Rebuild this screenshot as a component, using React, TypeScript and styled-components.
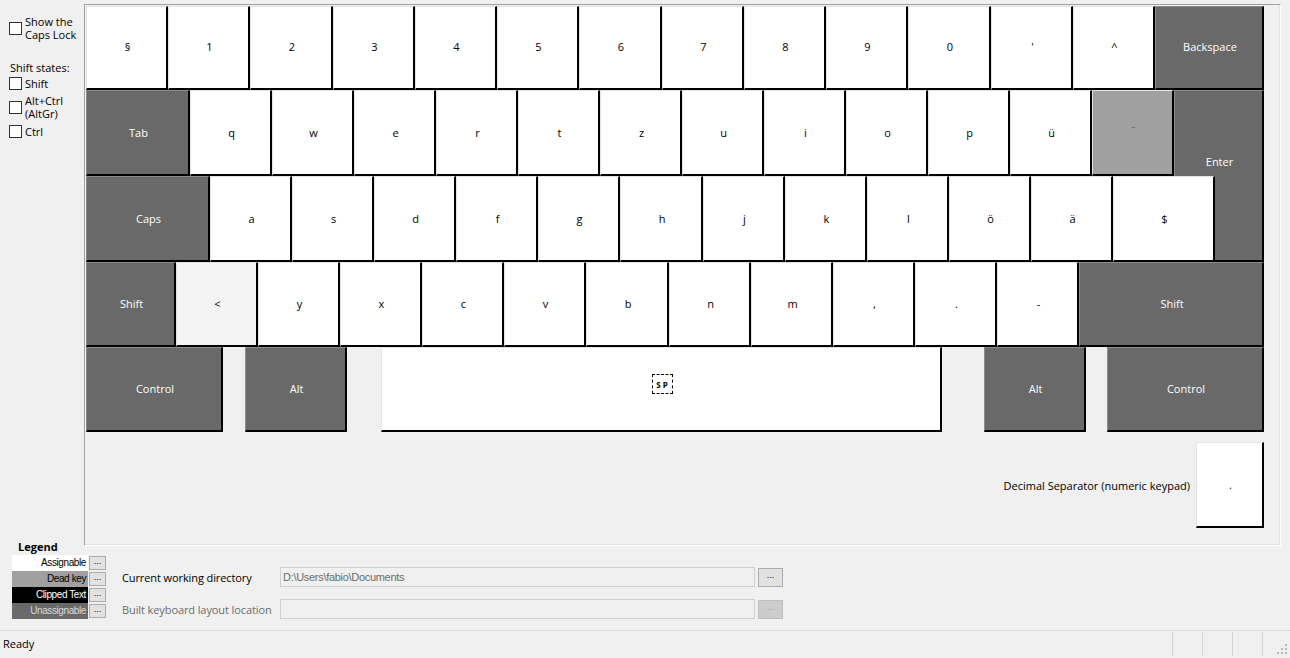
import React from 'react';
import styled, { createGlobalStyle } from 'styled-components';

const GlobalStyle = createGlobalStyle`
  html, body {
    margin: 0;
    padding: 0;
    background: #f0f0f0;
  }
  body {
    font-family: "Open Sans", "Noto Sans", sans-serif;
    font-size: 11px;
    color: #000;
  }
`;

type Kind = 'white' | 'dark' | 'dead' | 'soft';

const keyBg: Record<Kind, string> = {
    white: '#ffffff',
    dark: '#696969',
    dead: '#a0a0a0',
    soft: '#f4f4f4',
};

const Window = styled.div`
    width: 1290px;
    height: 658px;
    display: flex;
    flex-direction: column;
    overflow: hidden;
`;

const TopArea = styled.div`
    display: flex;
    height: 546px;
`;

const Sidebar = styled.div`
    width: 84px;
    flex: none;
    box-sizing: border-box;
    padding: 15px 0 0 9px;
    display: flex;
    flex-direction: column;
`;

const CheckRow = styled.label<{ $mt: number }>`
    display: flex;
    align-items: center;
    gap: 3px;
    margin-top: ${p => p.$mt}px;
    line-height: 13px;
`;

const Box = styled.span`
    width: 13px;
    height: 13px;
    box-sizing: border-box;
    border: 1px solid #333;
    background: #fff;
    flex: none;
`;

const SideHeading = styled.div`
    margin-top: 20px;
    margin-left: 1px;
    line-height: 13px;
`;

const Board = styled.div`
    box-sizing: border-box;
    margin-top: 4px;
    width: 1197px;
    height: 542px;
    border-top: 1px solid #a0a0a0;
    border-left: 1px solid #a0a0a0;
    border-right: 1px solid #fff;
    border-bottom: 1px solid #fff;
    box-shadow: inset -1px -1px 0 #e3e3e3;
    padding: 1px 0 0 1px;
`;

const Keys = styled.div`
    width: 1178px;
    display: flex;
    flex-direction: column;
`;

const Row = styled.div<{ $h: number; $lift?: number }>`
    display: flex;
    height: ${p => p.$h}px;
    --lift: ${p => p.$lift ?? 1}px;
`;

const Gap = styled.div<{ $w: number }>`
    flex: none;
    width: ${p => p.$w}px;
`;

const Key = styled.div<{ $w: number; $kind: Kind; $open?: 'top' | 'bottom' }>`
    box-sizing: border-box;
    flex: none;
    width: ${p => p.$w}px;
    height: 100%;
    display: flex;
    align-items: ${p => (p.$open === 'bottom' ? 'flex-end' : 'center')};
    justify-content: center;
    padding-bottom: ${p => (p.$open === 'bottom' ? '7px' : 'var(--lift, 1px)')};
    padding-left: 2px;
    background: ${p => keyBg[p.$kind]};
    color: ${p => (p.$kind === 'dark' ? '#fff' : '#000')};
    border-top: ${p => (p.$open === 'top' ? 'none' : `1px solid ${p.$kind === 'dark' ? '#8c8c8c' : '#e3e3e3'}`)};
    border-left: ${p => (p.$open === 'top' ? 'none' : `1px solid ${p.$kind === 'dark' ? '#8c8c8c' : '#e3e3e3'}`)};
    border-right: 2px solid #000;
    border-bottom: ${p => (p.$open === 'bottom' ? 'none' : '2px solid #000')};
    white-space: pre;
`;

const DeadMark = styled.span`
    color: #333;
    font-size: 11px;
    line-height: 1;
    margin-bottom: 4px;
`;

const FocusMark = styled.span`
    box-sizing: border-box;
    width: 21px;
    height: 20px;
    border: 1px dashed #000;
    display: flex;
    align-items: center;
    justify-content: center;
    font-size: 8px;
    font-weight: 700;
    letter-spacing: 2px;
    padding-left: 2px;
    margin-bottom: 9px;
`;

const PadRow = styled.div`
    display: flex;
    justify-content: flex-end;
    align-items: center;
    gap: 6px;
    height: 86px;
    margin-top: 10px;
`;

const BottomArea = styled.div`
    display: flex;
    height: 84px;
    padding-left: 12px;
`;

const Legend = styled.div`
    width: 95px;
    flex: none;
    display: flex;
    flex-direction: column;
`;

const LegendTitle = styled.div`
    font-weight: 700;
    line-height: 15px;
    margin: -7px 0 1px 6px;
`;

const LegendRow = styled.div`
    display: flex;
    align-items: center;
    height: 16px;
`;

const Swatch = styled.div<{ $bg: string; $fg: string }>`
    width: 76px;
    height: 100%;
    box-sizing: border-box;
    background: ${p => p.$bg};
    color: ${p => p.$fg};
    font-family: "Liberation Sans", Arial, sans-serif;
    font-size: 10px;
    letter-spacing: -0.4px;
    text-align: right;
    line-height: 16px;
    padding-right: 2px;
`;

const DotsButton = styled.button<{ $disabled?: boolean; $w: number; $h: number }>`
    box-sizing: border-box;
    width: ${p => p.$w}px;
    height: ${p => p.$h}px;
    margin-left: 1px;
    padding: 0 0 3px;
    border: 1px solid ${p => (p.$disabled ? '#bfbfbf' : '#adadad')};
    background: ${p => (p.$disabled ? '#cccccc' : '#e1e1e1')};
    color: ${p => (p.$disabled ? '#a0a0a0' : '#000')};
    font-family: "Liberation Sans", Arial, sans-serif;
    font-size: 9px;
    line-height: 1;
    display: flex;
    align-items: center;
    justify-content: center;
`;

const Form = styled.div`
    margin-left: 15px;
    padding-top: 20px;
    display: flex;
    flex-direction: column;
    gap: 10px;
`;

const FormRow = styled.div<{ $dim?: boolean }>`
    display: flex;
    align-items: center;
    height: 22px;
    color: ${p => (p.$dim ? '#6d6d6d' : '#000')};
`;

const FormLabel = styled.div`
    width: 158px;
    letter-spacing: -0.1px;
`;

const PathBox = styled.div`
    box-sizing: border-box;
    width: 475px;
    height: 20px;
    border: 1px solid #cfcfcf;
    background: #f0f0f0;
    color: #6d6d6d;
    font-family: "Liberation Sans", Arial, sans-serif;
    font-size: 11px;
    letter-spacing: -0.3px;
    line-height: 18px;
    padding-left: 2px;
    margin-right: 2px;
`;

const StatusBar = styled.div`
    display: flex;
    height: 27px;
    border-top: 1px solid #dcdcdc;
    box-sizing: border-box;
`;

const StatusText = styled.div`
    flex: 1;
    padding-left: 3px;
    line-height: 26px;
`;

const StatusPanel = styled.div<{ $w: number }>`
    width: ${p => p.$w}px;
    border-left: 1px solid #d4d4d4;
    margin: 1px 0;
    position: relative;
`;

const Grip = styled.svg`
    position: absolute;
    right: 2px;
    bottom: 1px;
`;

// split a run of keys evenly between two x positions
function spread(labels: string[], start: number, end: number) {
    const step = (end - start) / labels.length;
    return labels.map((l, i) => ({
        label: l,
        w: Math.round(start + (i + 1) * step) - Math.round(start + i * step),
    }));
}

const row1 = spread(['1', '2', '3', '4', '5', '6', '7', '8', '9', '0', "'", '^'], 168, 1155);
const row2 = spread(['q', 'w', 'e', 'r', 't', 'z', 'u', 'i', 'o', 'p', 'ü'], 190, 1092);
const row3 = spread(['a', 's', 'd', 'f', 'g', 'h', 'j', 'k', 'l', 'ö', 'ä'], 210, 1113);
const row4 = spread(['<', 'y', 'x', 'c', 'v', 'b', 'n', 'm', ',', '.', '-'], 176, 1079);

const legend = [
    { text: 'Assignable', bg: '#ffffff', fg: '#000' },
    { text: 'Dead key', bg: '#a0a0a0', fg: '#000' },
    { text: 'Clipped Text', bg: '#000000', fg: '#fff' },
    { text: 'Unassignable', bg: '#696969', fg: '#d8d8d8' },
];

const App: React.FC = () => {
    return (
        <Window>
            <GlobalStyle />
            <TopArea>
                <Sidebar>
                    <CheckRow $mt={0}>
                        <Box />
                        <span>Show the<br />Caps Lock</span>
                    </CheckRow>
                    <SideHeading>Shift states:</SideHeading>
                    <CheckRow $mt={3}>
                        <Box />
                        <span>Shift</span>
                    </CheckRow>
                    <CheckRow $mt={4}>
                        <Box />
                        <span>Alt+Ctrl<br />(AltGr)</span>
                    </CheckRow>
                    <CheckRow $mt={5}>
                        <Box />
                        <span>Ctrl</span>
                    </CheckRow>
                </Sidebar>
                <Board>
                    <Keys>
                        <Row $h={84} $lift={3}>
                            <Key $w={82} $kind="white">§</Key>
                            {row1.map(k => <Key key={k.label} $w={k.w} $kind="white">{k.label}</Key>)}
                            <Key $w={109} $kind="dark">Backspace</Key>
                        </Row>
                        <Row $h={86}>
                            <Key $w={104} $kind="dark">Tab</Key>
                            {row2.map(k => <Key key={k.label} $w={k.w} $kind="white">{k.label}</Key>)}
                            <Key $w={82} $kind="dead"><DeadMark>¨</DeadMark></Key>
                            <Key $w={90} $kind="dark" $open="bottom">Enter</Key>
                        </Row>
                        <Row $h={86}>
                            <Key $w={124} $kind="dark">Caps</Key>
                            {row3.map(k => <Key key={k.label} $w={k.w} $kind="white">{k.label}</Key>)}
                            <Key $w={102} $kind="white">$</Key>
                            <Key $w={49} $kind="dark" $open="top" />
                        </Row>
                        <Row $h={85}>
                            <Key $w={90} $kind="dark">Shift</Key>
                            {row4.map((k, i) => (
                                <Key key={k.label} $w={k.w} $kind={i === 0 ? 'soft' : 'white'}>{k.label}</Key>
                            ))}
                            <Key $w={185} $kind="dark">Shift</Key>
                        </Row>
                        <Row $h={85}>
                            <Key $w={137} $kind="dark">Control</Key>
                            <Gap $w={22} />
                            <Key $w={102} $kind="dark">Alt</Key>
                            <Gap $w={34} />
                            <Key $w={561} $kind="white"><FocusMark>SP</FocusMark></Key>
                            <Gap $w={42} />
                            <Key $w={102} $kind="dark">Alt</Key>
                            <Gap $w={21} />
                            <Key $w={157} $kind="dark">Control</Key>
                        </Row>
                        <PadRow>
                            <span>Decimal Separator (numeric keypad)</span>
                            <Key $w={68} $kind="white">.</Key>
                        </PadRow>
                    </Keys>
                </Board>
            </TopArea>
            <BottomArea>
                <Legend>
                    <LegendTitle>Legend</LegendTitle>
                    {legend.map(l => (
                        <LegendRow key={l.text}>
                            <Swatch $bg={l.bg} $fg={l.fg}>{l.text}</Swatch>
                            <DotsButton $w={17} $h={14}>...</DotsButton>
                        </LegendRow>
                    ))}
                </Legend>
                <Form>
                    <FormRow>
                        <FormLabel>Current working directory</FormLabel>
                        <PathBox>D:\Users\fabio\Documents</PathBox>
                        <DotsButton $w={25} $h={19}>...</DotsButton>
                    </FormRow>
                    <FormRow $dim>
                        <FormLabel>Built keyboard layout location</FormLabel>
                        <PathBox />
                        <DotsButton $w={25} $h={19} $disabled>...</DotsButton>
                    </FormRow>
                </Form>
            </BottomArea>
            <StatusBar>
                <StatusText>Ready</StatusText>
                <StatusPanel $w={29} />
                <StatusPanel $w={29} />
                <StatusPanel $w={29} />
                <StatusPanel $w={27}>
                    <Grip width="12" height="12" viewBox="0 0 12 12">
                        {[[9, 1], [9, 5], [5, 5], [9, 9], [5, 9], [1, 9]].map(([x, y]) => (
                            <rect key={`${x}-${y}`} x={x} y={y} width="2" height="2" fill="#b8b8b8" />
                        ))}
                    </Grip>
                </StatusPanel>
            </StatusBar>
        </Window>
    );
};

export default App;
